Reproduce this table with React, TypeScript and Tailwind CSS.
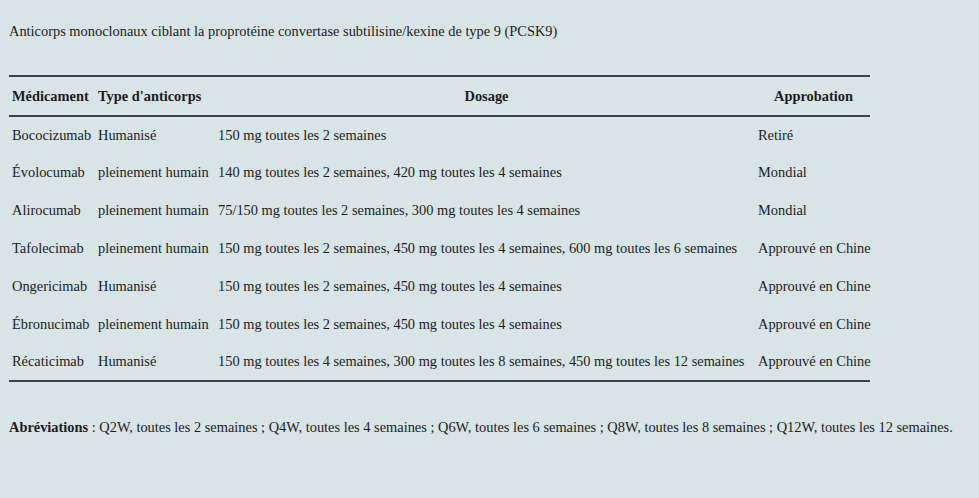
const rows = [
  ['Bococizumab', 'Humanisé', '150 mg toutes les 2 semaines', 'Retiré'],
  ['Évolocumab', 'pleinement humain', '140 mg toutes les 2 semaines, 420 mg toutes les 4 semaines', 'Mondial'],
  ['Alirocumab', 'pleinement humain', '75/150 mg toutes les 2 semaines, 300 mg toutes les 4 semaines', 'Mondial'],
  ['Tafolecimab', 'pleinement humain', '150 mg toutes les 2 semaines, 450 mg toutes les 4 semaines, 600 mg toutes les 6 semaines', 'Approuvé en Chine'],
  ['Ongericimab', 'Humanisé', '150 mg toutes les 2 semaines, 450 mg toutes les 4 semaines', 'Approuvé en Chine'],
  ['Ébronucimab', 'pleinement humain', '150 mg toutes les 2 semaines, 450 mg toutes les 4 semaines', 'Approuvé en Chine'],
  ['Récaticimab', 'Humanisé', '150 mg toutes les 4 semaines, 300 mg toutes les 8 semaines, 450 mg toutes les 12 semaines', 'Approuvé en Chine'],
];

export default function App() {
  return (
    <div className="w-[979px] h-[498px] bg-[#d8e4e6] text-[#1c1c1c] font-['Liberation_Serif',serif] text-[14.4px] overflow-hidden">
      <p className="pt-[21px] pl-[9px] leading-[20px]">
        Anticorps monoclonaux ciblant la proprotéine convertase subtilisine/kexine de type 9 (PCSK9)
      </p>

      <table className="ml-[9px] mt-[34px] w-[861px] border-collapse border-t-2 border-b-2 border-[#3a4446] table-fixed">
        <thead>
          <tr className="h-[40px] border-b-2 border-[#3a4446]">
            <th className="w-[87px] text-left pl-[3px] pt-[2px] font-bold">Médicament</th>
            <th className="w-[120px] text-left pl-[2px] pt-[2px] font-bold">Type d'anticorps</th>
            <th className="w-[541px] text-center pt-[2px] font-bold">Dosage</th>
            <th className="text-center pt-[2px] font-bold">Approbation</th>
          </tr>
        </thead>
        <tbody>
          {rows.map((r) => (
            <tr key={r[0]} className="h-[37.9px]">
              <td className="pl-[3px] whitespace-nowrap">{r[0]}</td>
              <td className="pl-[2px] whitespace-nowrap">{r[1]}</td>
              <td className="pl-[2px] whitespace-nowrap">{r[2]}</td>
              <td className="pl-[1px] whitespace-nowrap">{r[3]}</td>
            </tr>
          ))}
        </tbody>
      </table>

      <p className="pl-[9px] mt-[35px] leading-[20px]">
        <span className="font-bold">Abréviations</span> : Q2W, toutes les 2 semaines ; Q4W, toutes les 4 semaines ; Q6W, toutes les 6 semaines ; Q8W, toutes les 8 semaines ; Q12W, toutes les 12 semaines.
      </p>
    </div>
  );
}
